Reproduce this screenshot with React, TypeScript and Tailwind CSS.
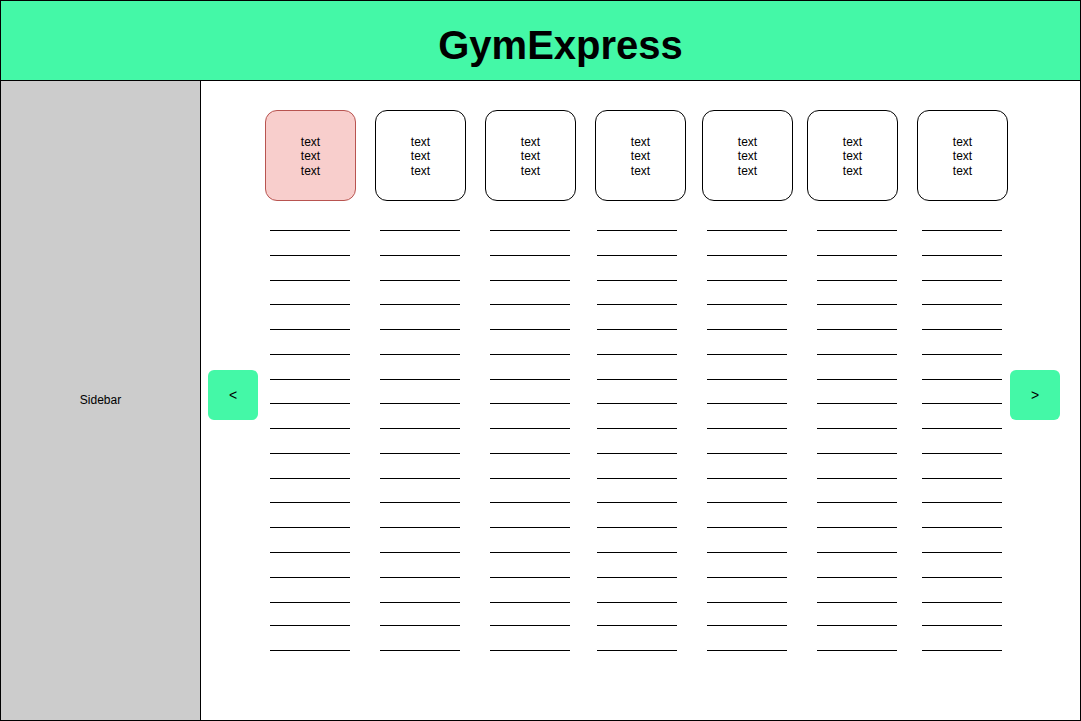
import React from 'react';

const cardGaps = ['ml-0', 'ml-[19px]', 'ml-[19px]', 'ml-[19px]', 'ml-[16px]', 'ml-[14px]', 'ml-[19px]'];
const lineGaps = ['ml-[5px]', 'ml-[30px]', 'ml-[30px]', 'ml-[27px]', 'ml-[30px]', 'ml-[30px]', 'ml-[25px]'];

// spacing above each rule line, so they land where the sketch has them
const ruleTops = [
  'mt-[29px]', 'mt-[24px]', 'mt-[24px]', 'mt-[23px]', 'mt-[24px]', 'mt-[24px]',
  'mt-[24px]', 'mt-[23px]', 'mt-[24px]', 'mt-[24px]', 'mt-[24px]', 'mt-[23px]',
  'mt-[24px]', 'mt-[24px]', 'mt-[24px]', 'mt-[24px]', 'mt-[22px]', 'mt-[24px]',
];

function DayCard({ active, gap }: { active?: boolean; gap: string }) {
  return (
    <div
      className={`${gap} flex h-[91px] w-[91px] shrink-0 flex-col items-center justify-center rounded-[12px] border pt-[2px] text-[12px] leading-[14.5px] text-black ${
        active ? 'border-[#b85450] bg-[#f8cecc]' : 'border-black bg-white'
      }`}
    >
      <span>text</span>
      <span>text</span>
      <span>text</span>
    </div>
  );
}

function NavButton({ label, className }: { label: string; className: string }) {
  return (
    <button
      className={`${className} mt-[289px] flex h-[50px] w-[50px] shrink-0 items-center justify-center rounded-[6px] bg-[#44f8a7] text-[14px] text-black`}
    >
      {label}
    </button>
  );
}

export default function App() {
  return (
    <div
      className="flex h-[721px] w-[1081px] flex-col border border-black bg-white"
      style={{ fontFamily: '"Liberation Sans", Arial, sans-serif' }}
    >
      <header className="flex h-[80px] shrink-0 items-center justify-center border-b border-black bg-[#44f8a7] pl-[40px] pt-[8px]">
        <h1 className="text-[40px] font-bold leading-none text-black">GymExpress</h1>
      </header>

      <div className="flex flex-1">
        <aside className="flex w-[200px] shrink-0 items-center justify-center border-r border-black bg-[#cccccc] pb-[2px] text-[12px] text-black">
          Sidebar
        </aside>

        <main className="flex flex-1 items-start pl-[7px]">
          <NavButton label="<" className="" />

          <div className="ml-[7px] flex w-[742px] shrink-0 flex-col pt-[29px]">
            <div className="flex">
              {cardGaps.map((gap, i) => (
                <DayCard key={i} gap={gap} active={i === 0} />
              ))}
            </div>

            <div className="flex">
              {lineGaps.map((gap, i) => (
                <div key={i} className={`${gap} flex w-[80px] shrink-0 flex-col`}>
                  {ruleTops.map((top, j) => (
                    <div key={j} className={`${top} h-px bg-black`} />
                  ))}
                </div>
              ))}
            </div>
          </div>

          <NavButton label=">" className="ml-[3px]" />
        </main>
      </div>
    </div>
  );
}
